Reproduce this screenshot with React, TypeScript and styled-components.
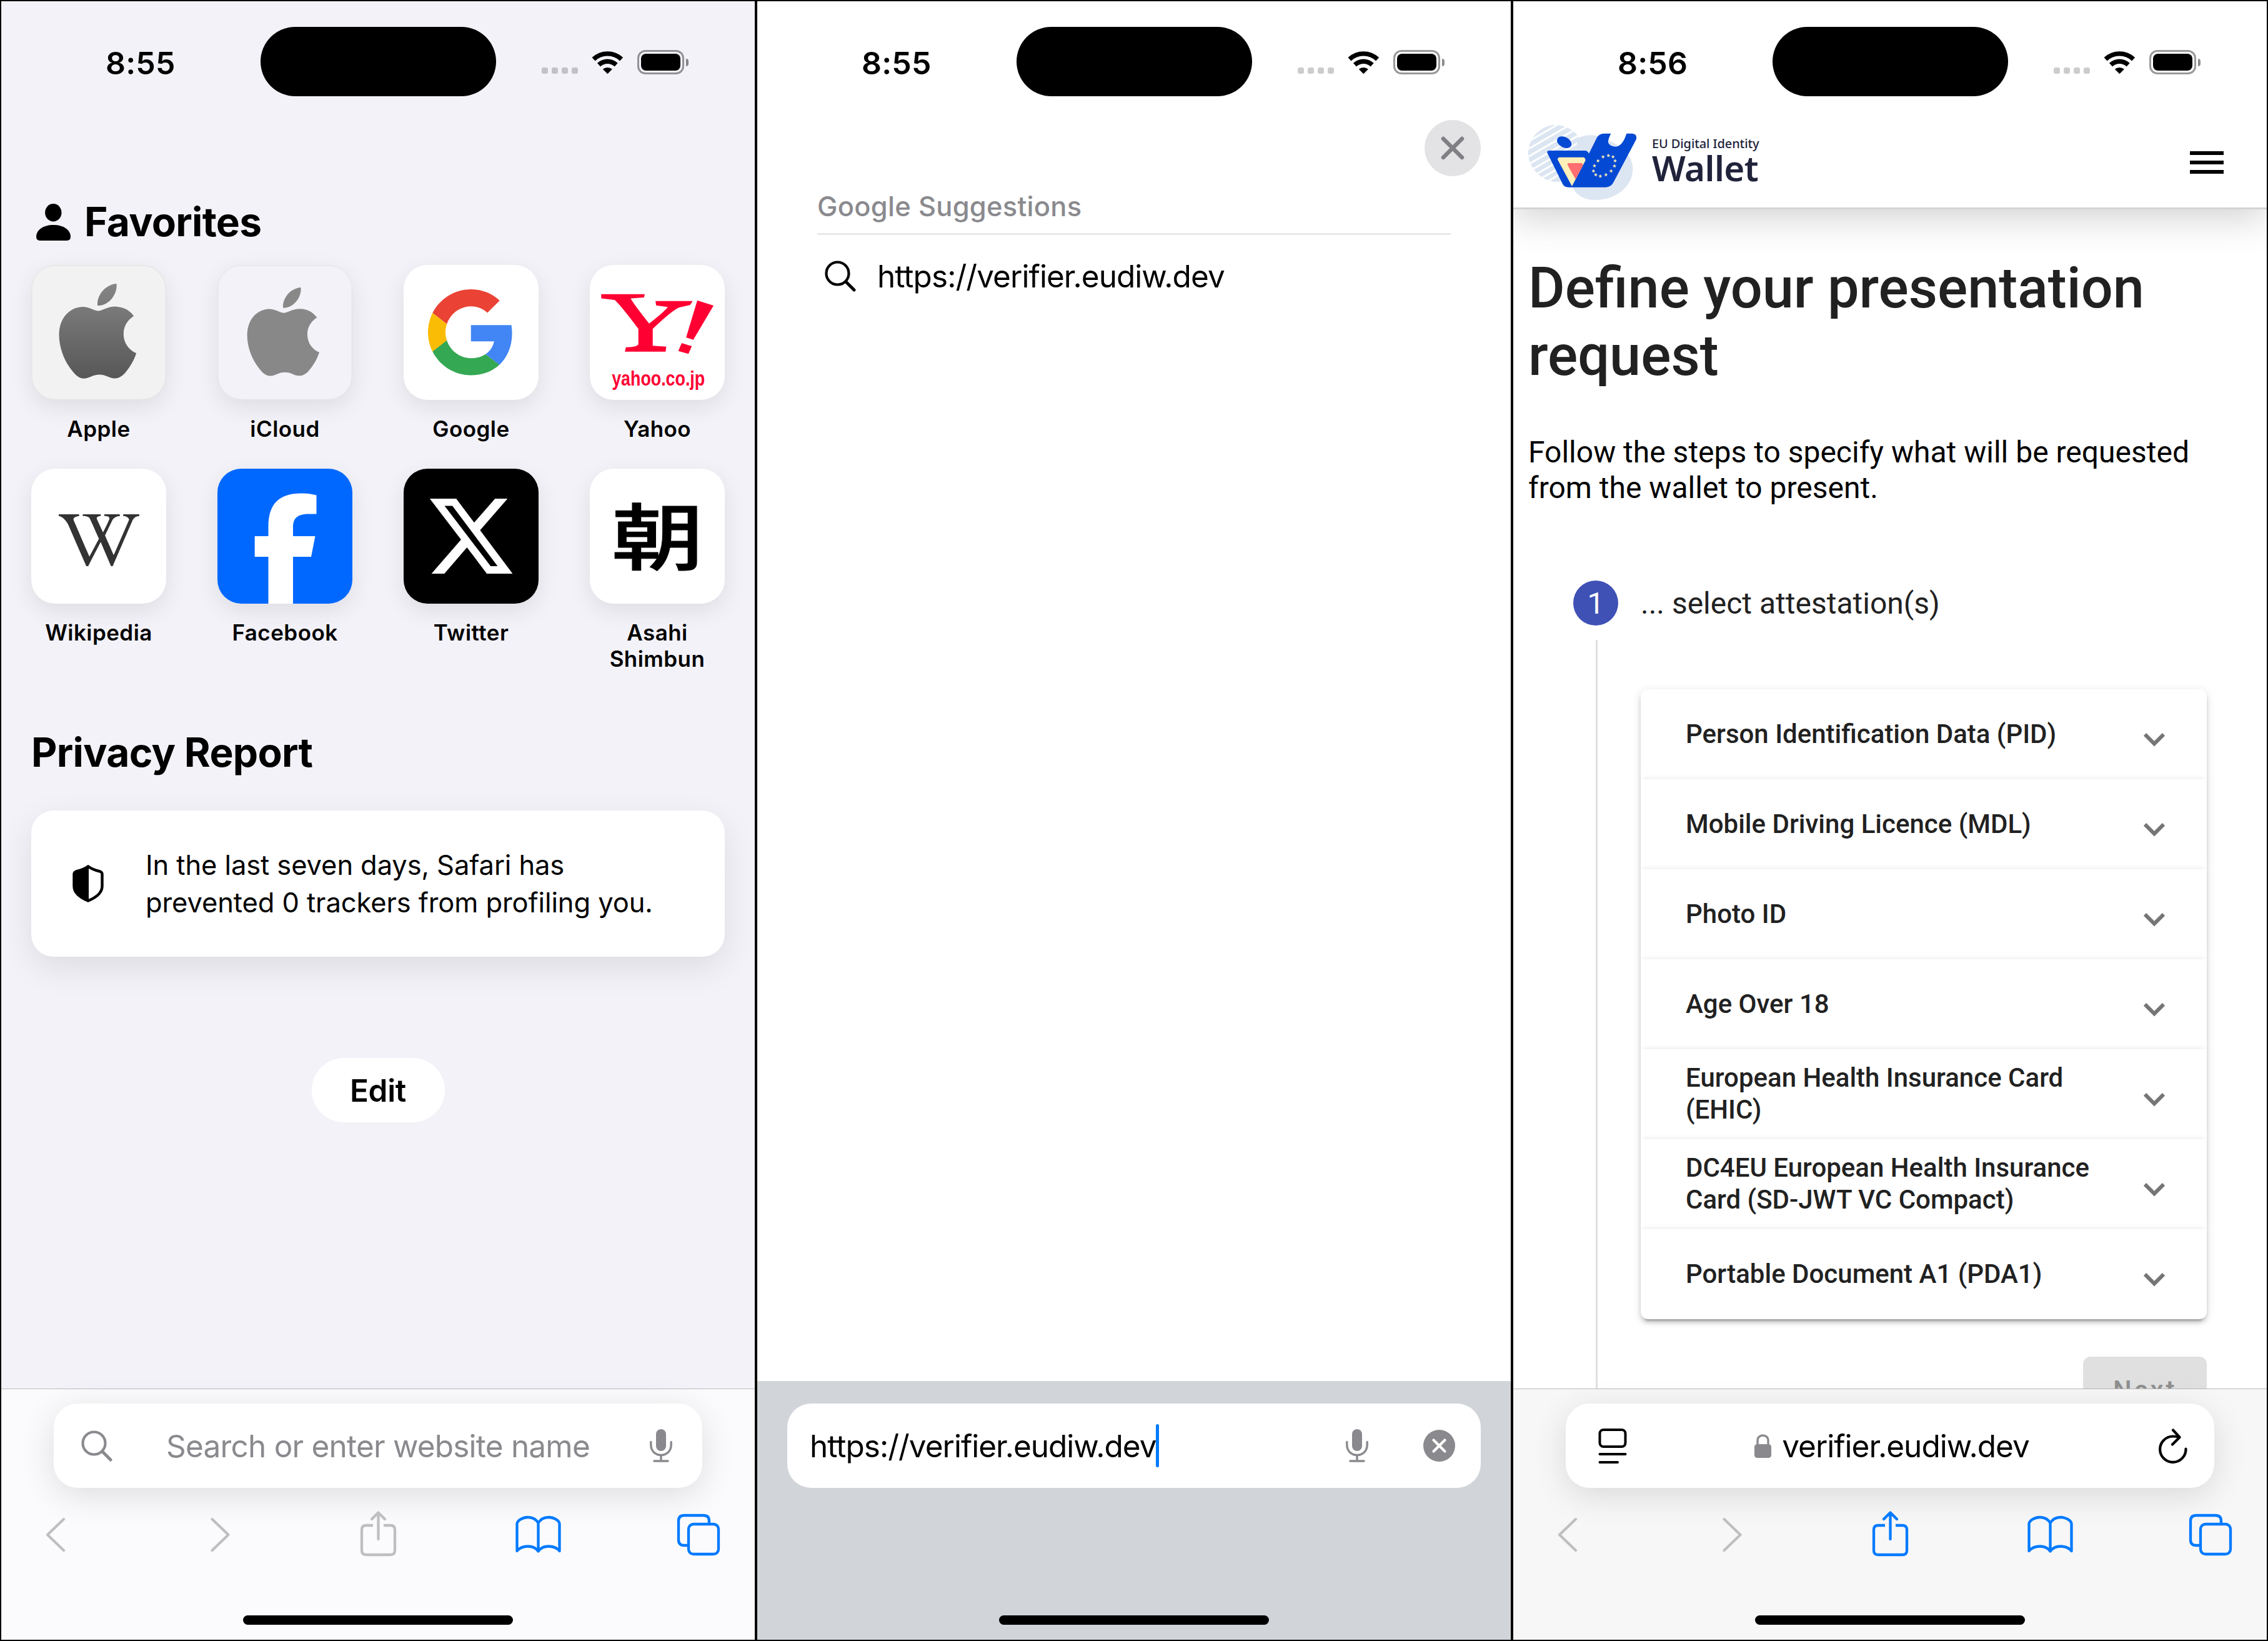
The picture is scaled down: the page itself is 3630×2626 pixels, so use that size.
import React from "react";
import styled, { createGlobalStyle } from "styled-components";
import { FaWikipediaW } from "react-icons/fa";

const SYSTEM = `Inter, "Liberation Sans", sans-serif`;

const GlobalStyle = createGlobalStyle`
  body { margin: 0; background: #000; }
  *, *::before, *::after { box-sizing: border-box; }
  svg { display: block; flex: none; }
`;

const Board = styled.main`
  display: flex;
  width: 3630px;
  height: 2626px;
  font-family: ${SYSTEM};
  color: #000;
`;

const Phone = styled.section<{ $bg: string }>`
  display: flex;
  flex-direction: column;
  width: 1210px;
  height: 2626px;
  border: 2px solid #000;
  background: ${(p) => p.$bg};
  overflow: hidden;
`;

const Screen = styled.div`
  flex: 1;
  min-height: 0;
  overflow: hidden;
`;

/* ---------- status bar ---------- */

const StatusBar = styled.header`
  display: flex;
  align-items: center;
  height: 152px;
  padding: 41px 0 0 167px;
`;

const Clock = styled.time`
  width: 248px;
  padding-top: 4px;
  font-size: 50px;
  font-weight: 600;
  line-height: 60px;
  letter-spacing: 0.2px;
`;

const Island = styled.div`
  width: 377px;
  height: 111px;
  margin-right: 73px;
  border-radius: 56px;
  background: #000;
`;

const Cellular = styled.div`
  display: flex;
  gap: 6px;
  margin: 28px 22px 0 0;
`;

const CellDot = styled.i`
  width: 10px;
  height: 10px;
  border-radius: 3px;
  background: rgba(0, 0, 0, 0.2);
`;

const WifiIcon = styled.svg`
  margin-top: 2px;
`;

const Battery = styled.div`
  display: flex;
  align-items: center;
  gap: 3px;
  margin: 2px 0 0 22px;
`;

const BatteryShell = styled.div`
  width: 75px;
  height: 39px;
  padding: 3px;
  border: 3px solid rgba(0, 0, 0, 0.4);
  border-radius: 13px;
`;

const BatteryLevel = styled.div`
  height: 100%;
  border-radius: 8px;
  background: #000;
`;

const BatteryCap = styled.div`
  width: 4px;
  height: 12px;
  border-radius: 0 4px 4px 0;
  background: rgba(0, 0, 0, 0.45);
`;

function Status({ time }: { time: string }) {
  return (
    <StatusBar>
      <Clock>{time}</Clock>
      <Island />
      <Cellular>
        <CellDot />
        <CellDot />
        <CellDot />
        <CellDot />
      </Cellular>
      <WifiIcon width="51" height="38" viewBox="262 60 151 116">
        <g fill="none" stroke="#000" strokeWidth="22.5">
          <path d="M269 102A99 99 0 0 1 405 102" />
          <path d="M294.7 129.4A61.5 61.5 0 0 1 379.3 129.4" />
        </g>
        <path d="M337 174L314 151A36 36 0 0 1 360 151Z" />
      </WifiIcon>
      <Battery>
        <BatteryShell>
          <BatteryLevel />
        </BatteryShell>
        <BatteryCap />
      </Battery>
    </StatusBar>
  );
}

/* ---------- start page ---------- */

const Section = styled.div<{ $top: number; $indent?: number }>`
  display: flex;
  align-items: center;
  gap: 22px;
  height: 80px;
  margin: ${(p) => p.$top}px 48px 0 ${(p) => 48 + (p.$indent ?? 0)}px;
`;

const SectionTitle = styled.h2`
  margin: 0;
  font-size: 64px;
  font-weight: 700;
  line-height: 80px;
  letter-spacing: -0.7px;
  white-space: nowrap;
`;

const Favorites = styled.div`
  display: grid;
  grid-template-columns: repeat(4, 216px);
  column-gap: 82px;
  row-gap: 43px;
  margin: 29px 48px 0;
`;

const Favorite = styled.a`
  display: flex;
  flex-direction: column;
  align-items: center;
  gap: 24px;
`;

const Tile = styled.div<{ $bg: string; $edge?: boolean }>`
  display: flex;
  align-items: center;
  justify-content: center;
  width: 216px;
  height: 216px;
  border-radius: 38px;
  overflow: hidden;
  background: ${(p) => p.$bg};
  box-shadow: 0 12px 36px rgba(0, 0, 0, 0.085)${(p) => (p.$edge ? ", inset 0 0 0 1.5px rgba(0,0,0,.05)" : "")};
`;

const TileLabel = styled.span`
  padding-top: 1px;
  font-size: 35px;
  font-weight: 560;
  line-height: 42px;
  text-align: center;
  letter-spacing: 0.45px;
`;

const PrivacyCard = styled.div`
  display: flex;
  align-items: center;
  gap: 67px;
  height: 234px;
  margin: 53px 48px 0;
  padding-left: 66px;
  border-radius: 36px;
  background: #fff;
  box-shadow: 0 18px 54px rgba(0, 0, 0, 0.09);
`;

const PrivacyText = styled.p`
  margin: 0;
  font-size: 43.5px;
  line-height: 60px;
  white-space: pre;
  letter-spacing: -0.1px;
`;

const EditButton = styled.button`
  display: block;
  width: 213px;
  height: 103px;
  margin: 162px auto 0;
  padding: 1px 0 0;
  border: 0;
  border-radius: 52px;
  background: #fff;
  color: #000;
  font: 600 49.5px/102px ${SYSTEM};
  letter-spacing: -0.3px;
`;

const APPLE =
  "M12.152 6.896c-.948 0-2.415-1.078-3.96-1.04-2.04.027-3.91 1.183-4.961 3.014-2.117 3.675-.546 9.103 1.519 12.09 1.013 1.454 2.208 3.09 3.792 3.039 1.52-.065 2.09-.987 3.935-.987 1.831 0 2.35.987 3.96.948 1.637-.026 2.676-1.48 3.676-2.948 1.156-1.688 1.636-3.325 1.662-3.415-.039-.013-3.182-1.221-3.22-4.857-.026-3.04 2.48-4.494 2.597-4.559-1.429-2.09-3.623-2.324-4.39-2.376-2-.156-3.675 1.09-4.61 1.09zM15.53 3.83c.843-1.012 1.4-2.427 1.245-3.83-1.207.052-2.662.805-3.532 1.818-.78.896-1.454 2.338-1.273 3.714 1.338.104 2.715-.688 3.559-1.701";

const AppleLogo = () => (
  <svg width="216" height="216" viewBox="0 0 216 216">
    <defs>
      <linearGradient id="appleShade" x1="0" y1="0" x2="0" y2="1">
        <stop offset="0" stopColor="#858585" />
        <stop offset="1" stopColor="#575757" />
      </linearGradient>
    </defs>
    <path fill="url(#appleShade)" d={APPLE} transform="translate(30.5 30) scale(6.32)" />
  </svg>
);

const ICloudLogo = () => (
  <svg width="216" height="216" viewBox="0 0 216 216">
    <path fill="#888" d={APPLE} transform="translate(34.5 36) scale(5.9)" />
  </svg>
);

const GoogleLogo = () => (
  <svg width="137.5" height="137.5" viewBox="0 0 48 48">
    <path fill="#ea4335" d="M24 9.5c3.54 0 6.71 1.22 9.21 3.6l6.85-6.85C35.9 2.38 30.47 0 24 0 14.62 0 6.51 5.38 2.56 13.22l7.98 6.19C12.43 13.72 17.74 9.5 24 9.5z" />
    <path fill="#4285f4" d="M46.98 24.55c0-1.57-.15-3.09-.38-4.55H24v9.02h12.94c-.58 2.96-2.26 5.48-4.78 7.18l7.73 6c4.51-4.18 7.09-10.36 7.09-17.65z" />
    <path fill="#fbbc05" d="M10.53 28.59c-.48-1.45-.76-2.99-.76-4.59s.27-3.14.76-4.59l-7.98-6.19C.92 16.46 0 20.12 0 24c0 3.88.92 7.54 2.56 10.78l7.97-6.19z" />
    <path fill="#34a853" d="M24 48c6.48 0 11.93-2.13 15.89-5.81l-7.73-6c-2.15 1.45-4.92 2.3-8.16 2.3-6.26 0-11.57-4.22-13.47-9.91l-7.98 6.19C6.51 42.62 14.62 48 24 48z" />
  </svg>
);

const YahooLogo = () => (
  <svg width="216" height="216" viewBox="899 11.4 639 616" preserveAspectRatio="none" fill="#ff0033">
    <path d="M953 145H1159L1156 160L1093 164Q1096 176 1180 279Q1255 222 1268 203L1213 196L1210 176H1386L1374 194L1320 206Q1285 222 1197 303V380L1261 384L1258 407H1065L1070 387Q1120 387 1129 374V303Q1045 195 1017 171L953 164Z" />
    <path d="M1408 173L1485 197L1389 353L1355 342ZM1334 368L1382 382L1366 417L1318 404Z" />
    <text x="1003" y="562" fontSize="96" fontWeight="700" fontFamily="Liberation Sans, sans-serif" textLength="441" lengthAdjust="spacingAndGlyphs">
      yahoo.co.jp
    </text>
  </svg>
);

const WikipediaLogo = styled(FaWikipediaW)`
  margin: 12px 0 0 1px;
  width: 129px;
  height: 129px;
  color: #333;
`;

const FacebookLogo = () => (
  <svg width="216" height="216" viewBox="0 0 216 216">
    <path fill="#fff" d="M81.5 216V141H59.7V108H81.5V93C81.5 56 99 39.5 134 39.5C145 39.5 154 41 158.5 42.5V72.5H147C128 72.5 121 79 121 94V108H156.5L150 141H121V216Z" />
  </svg>
);

const XLogo = () => (
  <svg width="216" height="216" viewBox="18 938 639 616" preserveAspectRatio="none">
    <path fill="#fff" fillRule="evenodd" d="M142 1075H267L352 1184L451 1075H510L380 1219L534 1417H412L318 1297L211 1417H150L290 1262ZM212 1108H249L463 1383H430Z" />
  </svg>
);

const AsahiMark = styled.span`
  font-family: "Noto Sans CJK JP", sans-serif;
  font-size: 125px;
  font-weight: 500;
  line-height: 216px;
  -webkit-text-stroke: 1px #000;
  transform: scale(1.18, 0.93) translateY(-6px);
`;

const PersonIcon = () => (
  <svg width="55" height="59" viewBox="0 0 55 59">
    <ellipse cx="27.3" cy="14.2" rx="13.2" ry="14.2" />
    <path d="M0 53C0 42 11 34 27.5 34S55 42 55 53Q55 59 48 59H7Q0 59 0 53Z" />
  </svg>
);

const ShieldIcon = () => (
  <svg width="50" height="60" viewBox="0 0 50 60">
    <path d="M25 2.5C31 7 38 9 44 10.5Q47.5 11.5 47.5 15V34C47.5 46 36 53 25 57.5C14 53 2.5 46 2.5 34V15Q2.5 11.5 6 10.5C12 9 19 7 25 2.5Z" fill="none" stroke="#000" strokeWidth="4.4" />
    <path d="M26 3V57C14 53 2.5 46 2.5 34V15Q2.5 11.5 6 10.5C12 9 19 7 26 3Z" />
  </svg>
);

const favorites = [
  { name: "Apple", bg: "#f2f2f2", edge: true, logo: <AppleLogo /> },
  { name: "iCloud", bg: "#f3f2f8", edge: true, logo: <ICloudLogo /> },
  { name: "Google", bg: "#fff", logo: <GoogleLogo /> },
  { name: "Yahoo", bg: "#fff", logo: <YahooLogo /> },
  { name: "Wikipedia", bg: "#fff", logo: <WikipediaLogo /> },
  { name: "Facebook", bg: "#0068ff", logo: <FacebookLogo /> },
  { name: "Twitter", bg: "#000", logo: <XLogo /> },
  { name: "Asahi Shimbun", bg: "#fff", logo: <AsahiMark>朝</AsahiMark> },
];

/* ---------- browser toolbar ---------- */

const Toolbar = styled.footer<{ $bg: string; $line: string }>`
  height: 402px;
  padding-top: 23px;
  border-top: 1px solid ${(p) => p.$line};
  background: ${(p) => p.$bg};
`;

const KeyboardBar = styled.footer`
  height: 414px;
  padding-top: 36px;
  background: #d1d4d9;
`;

const AddressField = styled.div<{ $inset: number; $pad: string; $flat?: boolean }>`
  display: flex;
  align-items: center;
  height: 135px;
  margin: 0 ${(p) => p.$inset}px;
  padding: ${(p) => p.$pad};
  border-radius: 38px;
  background: #fff;
  box-shadow: ${(p) => (p.$flat ? "none" : "0 12px 54px rgba(0, 0, 0, 0.12)")};
`;

const AddressText = styled.span<{ $color?: string; $spacing: number }>`
  font-size: 49.5px;
  line-height: 60px;
  letter-spacing: ${(p) => p.$spacing}px;
  color: ${(p) => p.$color ?? "#000"};
  white-space: nowrap;
`;

const Placeholder = styled(AddressText)`
  margin-right: 10px;
`;

const SiteAddress = styled.div`
  display: flex;
  align-items: center;
  gap: 17px;
  margin-right: 3px;
`;

const FieldControls = styled.div`
  display: flex;
  align-items: center;
  gap: 88px;
`;

const Spacer = styled.div`
  flex: 1;
`;

const Caret = styled.i`
  width: 5px;
  height: 69px;
  border-radius: 2.5px;
  background: #007aff;
`;

const Actions = styled.nav`
  display: flex;
  justify-content: space-between;
  margin: 35px 50.5px 0 46.5px;
`;

const HomeIndicator = styled.div<{ $top: number }>`
  width: 432px;
  height: 15px;
  margin: ${(p) => p.$top}px auto 0;
  border-radius: 8px;
  background: #000;
`;

const ActionIcon = ({ color, children }: { color: string; children: React.ReactNode }) => (
  <svg width="80" height="80" viewBox="0 0 80 80" fill="none" stroke={color} strokeWidth="4.3" strokeLinecap="round" strokeLinejoin="round">
    {children}
  </svg>
);

function ToolbarActions({ share }: { share: string }) {
  const muted = "#bfbfc1";
  const blue = "#007aff";
  return (
    <>
      <Actions>
        <ActionIcon color={muted}>
          <path d="M53 15L27 40L53 65" />
        </ActionIcon>
        <ActionIcon color={muted}>
          <path d="M33.5 15L59.5 40L33.5 65" />
        </ActionIcon>
        <ActionIcon color={share}>
          <path strokeLinecap="butt" d="M34 25H23Q16 25 16 32V65Q16 72 23 72H62Q69 72 69 65V32Q69 25 62 25H51" />
          <path d="M42.5 47V5M32 15L42.5 4.5L53 15" />
        </ActionIcon>
        <ActionIcon color={blue}>
          <path d="M41.5 21C37.5 14.5 31.5 12 25 12C16.5 12 8.5 17 7.5 22V66C11.5 61 18.5 58.5 25 58.5C32.5 58.5 38.5 62 41.5 66.5C44.5 62 50.5 58.5 58 58.5C64.5 58.5 71.5 61 75.5 66V22C74.5 17 66.5 12 58 12C51.5 12 45.5 14.5 41.5 21ZM41.5 21V66" />
        </ActionIcon>
        <ActionIcon color={blue}>
          <path strokeLinecap="butt" d="M22 57H17Q8 57 8 48V18Q8 9 17 9H48Q57 9 57 18V21" />
          <rect x="24" y="23" width="48" height="48" rx="8" />
        </ActionIcon>
      </Actions>
      <HomeIndicator $top={89} />
    </>
  );
}

const SearchIcon = ({ color }: { color: string }) => (
  <svg width="50" height="50" viewBox="0 0 50 50" fill="none" stroke={color} strokeWidth="4.2" strokeLinecap="round">
    <circle cx="20.5" cy="20.5" r="18" />
    <path d="M34 34L47 47" strokeWidth="5" />
  </svg>
);

const MicIcon = () => (
  <svg width="36" height="53" viewBox="0 0 36 53" fill="none" stroke="#8a8a8e" strokeWidth="3.4" strokeLinecap="round">
    <rect x="10" y="0" width="16" height="35" rx="8" fill="#8a8a8e" stroke="none" />
    <path d="M1.8 20.5V25C1.8 35 9 41.5 18 41.5S34.2 35 34.2 25V20.5M18 42V50M7 51H29" />
  </svg>
);

/* ---------- suggestions ---------- */

const CloseButton = styled.button`
  display: flex;
  align-items: center;
  justify-content: center;
  width: 90px;
  height: 90px;
  margin: 38px 48px 0 auto;
  padding: 0;
  border: 0;
  border-radius: 50%;
  background: #e3e3e5;
`;

const SuggestionHeading = styled.div`
  height: 75px;
  margin: 18px 96px 0;
  border-bottom: 1px solid #c6c6c8;
  font-size: 43.5px;
  font-weight: 500;
  line-height: 60px;
  letter-spacing: 0.25px;
  color: #8a8a8e;
`;

const Suggestion = styled.div`
  display: flex;
  align-items: center;
  gap: 34px;
  margin: 37px 0 0 108px;
`;

/* ---------- verifier page ---------- */

const SiteHeader = styled.div`
  display: flex;
  align-items: center;
  justify-content: space-between;
  height: 181px;
  padding: 34px 69px 0 23px;
  border-bottom: 3px solid #d4d4d4;
  background: #fff;
  box-shadow: 0 14px 60px rgba(0, 0, 0, 0.18);
  clip-path: inset(0 0 -90px 0);
`;

const Brand = styled.div`
  display: flex;
  align-items: center;
  gap: 24px;
  font-family: "Noto Sans", sans-serif;
  color: #20233a;
`;

const BrandSmall = styled.div`
  font-size: 20px;
  font-weight: 500;
  line-height: 24px;
  letter-spacing: -0.1px;
  white-space: nowrap;
`;

const BrandLarge = styled.div`
  margin-top: -3px;
  padding-bottom: 3px;
  font-size: 56.5px;
  font-weight: 600;
  line-height: 60px;
  letter-spacing: -0.6px;
`;

const Menu = styled.div`
  display: flex;
  flex-direction: column;
  gap: 9px;
`;

const MenuBar = styled.i`
  width: 54px;
  height: 6px;
  background: #000;
`;

const Page = styled.div`
  font-family: Roboto, sans-serif;
  color: #212121;
`;

const PageTitle = styled.h1`
  margin: 73px 24px 0;
  font-size: 90px;
  font-weight: 500;
  line-height: 108px;
  white-space: pre;
`;

const Intro = styled.p`
  margin: 71px 24px 0;
  font-size: 48px;
  line-height: 57px;
  white-space: pre;
  color: #000;
`;

const StepHeader = styled.div`
  display: flex;
  align-items: center;
  gap: 36px;
  height: 72px;
  margin: 120px 0 0 96px;
  font-size: 48px;
  line-height: 74px;
`;

const StepNumber = styled.b`
  width: 72px;
  height: 72px;
  border-radius: 50%;
  background: #3f51b5;
  color: #fff;
  font-weight: 400;
  text-align: center;
`;

const StepTitle = styled.span`
  padding-top: 2px;
  white-space: nowrap;
`;

const StepBody = styled.div`
  margin: 23px 96px 0 132px;
  padding: 79px 0 120px 69px;
  border-left: 3px solid #e0e0e0;
`;

const Accordion = styled.div`
  border-radius: 12px;
  background: #fff;
  box-shadow: 0 9px 3px -6px rgba(0, 0, 0, 0.2), 0 6px 6px rgba(0, 0, 0, 0.14), 0 3px 15px rgba(0, 0, 0, 0.12);
`;

const Panel = styled.div`
  display: flex;
  align-items: center;
  justify-content: space-between;
  height: 144px;
  padding: 0 67px 2px 72px;
  font-size: 42px;
  font-weight: 500;
  line-height: 51px;
  white-space: pre;

  & + & {
    box-shadow: 0 -5px 7px -3px rgba(0, 0, 0, 0.07);
  }

  svg {
    margin-top: 20px;
  }
`;

const NextButton = styled.button`
  display: block;
  width: 198px;
  height: 108px;
  margin: 60px 0 0 auto;
  padding: 0;
  border: 0;
  border-radius: 12px;
  background: #e0e0e0;
  color: #8f8f8f;
  font: 500 42px/108px Roboto, sans-serif;
  letter-spacing: 3.7px;
`;

const credentials = [
  "Person Identification Data (PID)",
  "Mobile Driving Licence (MDL)",
  "Photo ID",
  "Age Over 18",
  "European Health Insurance Card\n(EHIC)",
  "DC4EU European Health Insurance\nCard (SD-JWT VC Compact)",
  "Portable Document A1 (PDA1)",
];

const stars: [number, number][] = [
  [433, 207], [455, 213], [465, 232], [462, 257], [446, 281], [421, 299],
  [394, 306], [372, 299], [361, 281], [366, 256], [383, 232], [407, 213],
];

const starPoints = (cx: number, cy: number) =>
  Array.from({ length: 10 }, (_, i) => {
    const r = i % 2 ? 4 : 10;
    const a = (i * Math.PI) / 5 - Math.PI / 2 + 0.15;
    return `${(cx + r * Math.cos(a)).toFixed(1)},${(cy + r * Math.sin(a)).toFixed(1)}`;
  }).join(" ");

const WalletLogo = () => (
  <svg width="175" height="122" viewBox="45 57 525 366">
    <defs>
      <clipPath id="blob">
        <path d="M180 59C225 62 262 82 288 112L300 230L230 325C205 336 165 335 140 325C85 300 48 250 48 195C48 120 110 60 180 59Z" />
      </clipPath>
    </defs>
    <g clipPath="url(#blob)">
      <rect x="45" y="57" width="260" height="290" fill="#dce6f2" />
      <g stroke="#fff" strokeWidth="9">
        {[167, 203, 240, 277, 312, 346, 380, 412].map((c) => (
          <path key={c} d={`M40 ${c - 23}L300 ${c - 173}`} />
        ))}
      </g>
    </g>
    <path fill="#dce6f2" d="M284 124C320 104 370 104 410 124C500 160 550 205 550 272C550 352 470 420 372 420C315 420 282 398 262 362Z" />
    <ellipse cx="221" cy="143" rx="37" ry="25" transform="rotate(28 221 143)" fill="#0449d3" />
    <path fill="#0449d3" d="M150 183H322Q334 184 339 198L378 120Q388 102 412 101H445Q430 130 432 145Q440 163 465 164Q500 164 520 101H548Q573 104 566 130L458 334Q446 359 420 359H240Q222 359 214 345L140 195Q136 183 150 183Z" />
    <path fill="#ffefb8" d="M200 215H312Q325 218 322 232L258 354L190 228Q186 217 200 215Z" />
    <path fill="#ff6e70" d="M241 243H305Q313 248 309 258L275 320L238 254Q234 245 241 243Z" />
    {stars.map(([x, y]) => (
      <polygon key={`${x}-${y}`} points={starPoints(x, y)} fill="#ffefb8" />
    ))}
  </svg>
);

export default function App() {
  return (
    <>
      <GlobalStyle />
      <Board>
        <Phone $bg="#f3f2f8">
          <Screen>
            <Status time="8:55" />
            <Section $top={161} $indent={8}>
              <PersonIcon />
              <SectionTitle>Favorites</SectionTitle>
            </Section>
            <Favorites>
              {favorites.map((f) => (
                <Favorite key={f.name}>
                  <Tile $bg={f.bg} $edge={f.edge}>
                    {f.logo}
                  </Tile>
                  <TileLabel>{f.name}</TileLabel>
                </Favorite>
              ))}
            </Favorites>
            <Section $top={89}>
              <SectionTitle>Privacy Report</SectionTitle>
            </Section>
            <PrivacyCard>
              <ShieldIcon />
              <PrivacyText>{"In the last seven days, Safari has\nprevented 0 trackers from profiling you."}</PrivacyText>
            </PrivacyCard>
            <EditButton>Edit</EditButton>
          </Screen>
          <Toolbar $bg="#fbfbfd" $line="#bbbabf">
            <AddressField $inset={84} $pad="0 48px 0 44px">
              <SearchIcon color="#8a8a8e" />
              <Spacer />
              <Placeholder $color="#8a8a8e" $spacing={-0.8}>
                Search or enter website name
              </Placeholder>
              <Spacer />
              <MicIcon />
            </AddressField>
            <ToolbarActions share="#bfbfc1" />
          </Toolbar>
        </Phone>

        <Phone $bg="#fff">
          <Screen>
            <Status time="8:55" />
            <CloseButton>
              <svg width="38" height="38" viewBox="0 0 38 38" stroke="#7f7f84" strokeWidth="6.5" strokeLinecap="round">
                <path d="M4 4L34 34M34 4L4 34" />
              </svg>
            </CloseButton>
            <SuggestionHeading>Google Suggestions</SuggestionHeading>
            <Suggestion>
              <SearchIcon color="#000" />
              <AddressText $spacing={-0.95}>https://verifier.eudiw.dev</AddressText>
            </Suggestion>
          </Screen>
          <KeyboardBar>
            <AddressField $inset={48} $pad="0 41px 0 36px" $flat>
              <AddressText $spacing={-1}>https://verifier.eudiw.dev</AddressText>
              <Caret />
              <Spacer />
              <FieldControls>
                <MicIcon />
                <svg width="51" height="51" viewBox="0 0 51 51">
                  <circle cx="25.5" cy="25.5" r="25.5" fill="#8a8a8e" />
                  <path d="M16.5 16.5L34.5 34.5M34.5 16.5L16.5 34.5" stroke="#fff" strokeWidth="4.2" strokeLinecap="round" />
                </svg>
              </FieldControls>
            </AddressField>
            <HomeIndicator $top={204} />
          </KeyboardBar>
        </Phone>

        <Phone $bg="#fff">
          <Screen>
            <Status time="8:56" />
            <SiteHeader>
              <Brand>
                <WalletLogo />
                <div>
                  <BrandSmall>EU Digital Identity</BrandSmall>
                  <BrandLarge>Wallet</BrandLarge>
                </div>
              </Brand>
              <Menu>
                <MenuBar />
                <MenuBar />
                <MenuBar />
              </Menu>
            </SiteHeader>
            <Page>
              <PageTitle>{"Define your presentation\nrequest"}</PageTitle>
              <Intro>{"Follow the steps to specify what will be requested\nfrom the wallet to present."}</Intro>
              <StepHeader>
                <StepNumber>1</StepNumber>
                <StepTitle>... select attestation(s)</StepTitle>
              </StepHeader>
              <StepBody>
                <Accordion>
                  {credentials.map((c) => (
                    <Panel key={c}>
                      <span>{c}</span>
                      <svg width="34" height="22" viewBox="0 0 34 22" fill="none" stroke="#757575" strokeWidth="6">
                        <path d="M2 2.2L17 17.2L32 2.2" />
                      </svg>
                    </Panel>
                  ))}
                </Accordion>
                <NextButton>Next</NextButton>
              </StepBody>
            </Page>
          </Screen>
          <Toolbar $bg="#f7f7f7" $line="#b8b8b8">
            <AddressField $inset={84} $pad="0 43px 0 52px">
              <svg width="46" height="56" viewBox="0 0 46 56" fill="none" stroke="#000" strokeWidth="4" strokeLinecap="round">
                <rect x="2.5" y="2" width="41" height="27" rx="6" />
                <path d="M2.5 41H43.5M2.5 54H31" />
              </svg>
              <Spacer />
              <SiteAddress>
                <svg width="27" height="38" viewBox="0 0 27 38">
                  <path d="M5 18V10.5C5 5 8.5 2 13.5 2S22 5 22 10.5V18" fill="none" stroke="#8a8a8e" strokeWidth="3.4" />
                  <rect y="16" width="27" height="22" rx="4.5" fill="#8a8a8e" />
                </svg>
                <AddressText $spacing={-1}>verifier.eudiw.dev</AddressText>
              </SiteAddress>
              <Spacer />
              <svg width="46" height="56" viewBox="0 0 46 56" fill="none" stroke="#000" strokeWidth="4.2" strokeLinecap="round" strokeLinejoin="round">
                <path d="M43.5 32.5A20.7 20.7 0 1 1 22.8 12.5Q28 12.5 33 14M23 2.5L33.5 14L22 25.5" />
              </svg>
            </AddressField>
            <ToolbarActions share="#007aff" />
          </Toolbar>
        </Phone>
      </Board>
    </>
  );
}
